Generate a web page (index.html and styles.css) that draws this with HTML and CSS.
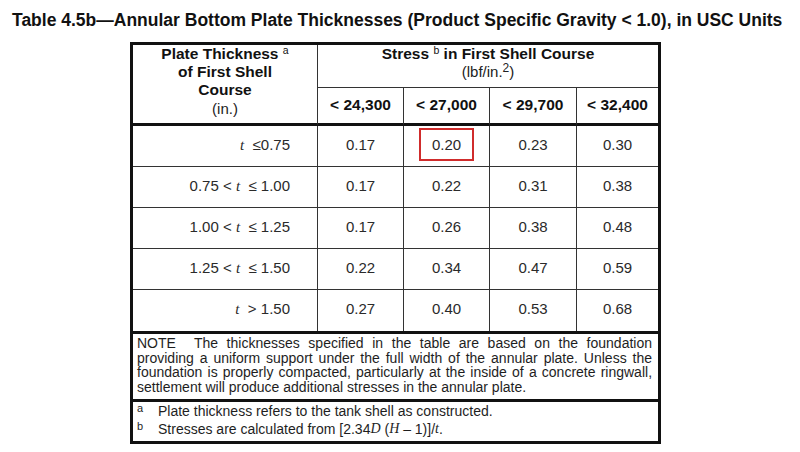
FILE: index.html
```html
<!DOCTYPE html>
<html>
<head>
<meta charset="utf-8">
<link rel="stylesheet" href="styles.css">
</head>
<body>
<div class="page">
<h1 class="title">Table 4.5b—Annular Bottom Plate Thicknesses (Product Specific Gravity &lt; 1.0), in USC Units</h1>
<table class="tbl">
<colgroup><col class="c1"><col class="c2"><col class="c3"><col class="c4"><col class="c5"></colgroup>
<thead>
<tr class="hr1">
<th rowspan="2" class="plate"><div class="bl">Plate Thickness <sup class="fn">a</sup></div><div class="bl">of First Shell</div><div class="bl">Course</div><div class="unit">(in.)</div></th>
<th colspan="4" class="stress"><div class="bl">Stress <sup class="fn">b</sup> in First Shell Course</div><div class="unit">(lbf/in.<sup class="sq">2</sup>)</div></th>
</tr>
<tr class="hr2">
<th class="sub">&lt; 24,300</th><th class="sub">&lt; 27,000</th><th class="sub">&lt; 29,700</th><th class="sub last">&lt; 32,400</th>
</tr>
</thead>
<tbody>
<tr class="dr"><td class="rng"><i class="v">t</i>&nbsp; ≤0.75</td><td>0.17</td><td><span class="hl">0.20</span></td><td>0.23</td><td class="last">0.30</td></tr>
<tr class="dr"><td class="rng">0.75 &lt; <i class="v">t</i>&nbsp; ≤ 1.00</td><td>0.17</td><td>0.22</td><td>0.31</td><td class="last">0.38</td></tr>
<tr class="dr"><td class="rng">1.00 &lt; <i class="v">t</i>&nbsp; ≤ 1.25</td><td>0.17</td><td>0.26</td><td>0.38</td><td class="last">0.48</td></tr>
<tr class="dr"><td class="rng">1.25 &lt; <i class="v">t</i>&nbsp; ≤ 1.50</td><td>0.22</td><td>0.34</td><td>0.47</td><td class="last">0.59</td></tr>
<tr class="dr lastrow"><td class="rng"><i class="v">t</i>&nbsp; &gt; 1.50</td><td>0.27</td><td>0.40</td><td>0.53</td><td class="last">0.68</td></tr>
<tr class="noterow"><td colspan="5" class="note">
<div class="jl"><span class="nl">NOTE</span>The thicknesses specified in the table are based on the foundation</div>
<div class="jl">providing a uniform support under the full width of the annular plate. Unless the</div>
<div class="jl">foundation is properly compacted, particularly at the inside of a concrete ringwall,</div>
<div class="ll">settlement will produce additional stresses in the annular plate.</div>
</td></tr>
<tr class="fnrow"><td colspan="5" class="fns">
<div class="fnl"><span class="mk">a</span>Plate thickness refers to the tank shell as constructed.</div>
<div class="fnl"><span class="mk">b</span>Stresses are calculated from [2.34<i class="v">D</i>&nbsp;(<i class="v">H</i>&nbsp;– 1)]/<i class="v">t</i>.</div>
</td></tr>
</tbody>
</table>
</div>
</body>
</html>
```
FILE: styles.css
```css
html, body { margin: 0; padding: 0; background: #fff; }
body { font-family: "Liberation Sans", Arial, sans-serif; color: #111; }
.page { padding-top: 10px; }
.title { margin: 0 0 0 12px; font-size: 17.5px; line-height: 20px; font-weight: bold; color: #111; white-space: nowrap; }
.tbl { margin: 12px 0 0 130px; width: 531px; border: 3px solid #111; border-collapse: separate; border-spacing: 0; table-layout: fixed; }
.c1 { width: 185px; } .c2 { width: 86px; } .c3 { width: 86px; } .c4 { width: 87px; } .c5 { width: 81px; }
th, td { padding: 0; font-size: 15px; }
th { font-weight: bold; color: #111; font-size: 15.5px; }
.plate { border-right: 1px solid #333; border-bottom: 3px solid #111; vertical-align: top; text-align: center; height: 78px; }
.bl { line-height: 18px; }
.unit { font-weight: normal; line-height: 18px; color: #222; font-size: 15px; }
.plate .unit { margin-top: 1px; }
.fn { font-size: 10.5px; font-weight: normal; vertical-align: 5px; line-height: 0; }
.sq { font-size: 12px; vertical-align: 5px; line-height: 0; }
.stress { border-bottom: 1px solid #333; vertical-align: top; text-align: center; height: 42px; }
.hr2 .sub { border-right: 1px solid #333; border-bottom: 3px solid #111; height: 34px; padding-bottom: 1px; text-align: center; vertical-align: middle; line-height: 18px; }
.hr2 .sub.last { border-right: none; }
.dr td { height: 37px; padding-bottom: 3px; border-right: 1px solid #333; border-bottom: 1px solid #333; text-align: center; vertical-align: middle; color: #2a2a2a; line-height: 18px; }
.dr td.last { border-right: none; }
.dr.lastrow td { border-bottom: none; height: 38px; }
.dr td.rng { text-align: right; padding-right: 27px; }
.v { font-family: "Liberation Serif", "Times New Roman", serif; font-style: italic; }
.hl { display: inline-block; width: 51px; height: 29px; line-height: 29px; border: 2px solid #d02c2c; position: relative; top: 0; }
.note { border-top: 3px solid #111; border-bottom: 3px solid #111; padding: 2px 6px 5px 4px; vertical-align: top; color: #1e1e1e; font-size: 14px; }
.jl, .ll { line-height: 14.5px; text-align: justify; }
.jl { text-align-last: justify; }
.nl { margin-right: 18px; }
.fns { padding: 0 6px 3px 4px; vertical-align: top; height: 36px; font-size: 14px; color: #1e1e1e; }
.fnl { line-height: 18px; display: flex; }
.mk { width: 21px; font-size: 11px; position: relative; top: -3px; }
```
